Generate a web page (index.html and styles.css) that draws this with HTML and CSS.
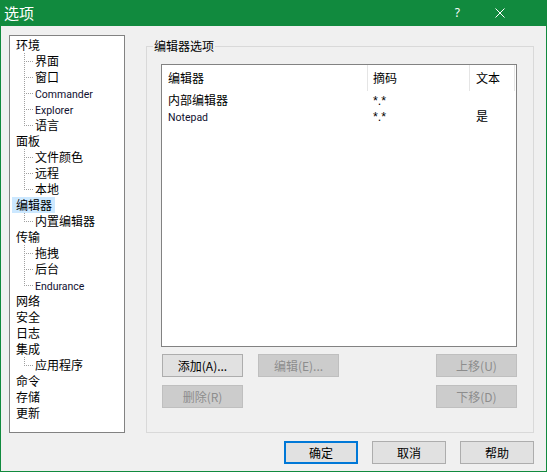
FILE: index.html
```html
<!DOCTYPE html>
<html lang="zh-CN">
<head>
<meta charset="utf-8">
<title>选项</title>
<link rel="stylesheet" href="styles.css">
</head>
<body>
<div class="window">
  <div class="titlebar">
    <span class="title">选项</span>
    <span class="help">?</span>
    <span class="close"><svg width="10" height="10" viewBox="0 0 10 10"><path d="M0.5 0.5 L9.5 9.5 M9.5 0.5 L0.5 9.5" stroke="#fff" stroke-width="1" fill="none"/></svg></span>
  </div>
  <div class="content">
    <div class="main">
      <div class="tree">
        <div class="node"><span>环境</span></div>
        <div class="children">
          <div class="child">界面</div>
          <div class="child">窗口</div>
          <div class="child"><span class="en">Commander</span></div>
          <div class="child"><span class="en">Explorer</span></div>
          <div class="child last">语言</div>
        </div>
        <div class="node"><span>面板</span></div>
        <div class="children">
          <div class="child">文件颜色</div>
          <div class="child">远程</div>
          <div class="child last">本地</div>
        </div>
        <div class="node sel"><span>编辑器</span></div>
        <div class="children">
          <div class="child last">内置编辑器</div>
        </div>
        <div class="node"><span>传输</span></div>
        <div class="children">
          <div class="child">拖拽</div>
          <div class="child">后台</div>
          <div class="child last"><span class="en">Endurance</span></div>
        </div>
        <div class="node"><span>网络</span></div>
        <div class="node"><span>安全</span></div>
        <div class="node"><span>日志</span></div>
        <div class="node"><span>集成</span></div>
        <div class="children">
          <div class="child last">应用程序</div>
        </div>
        <div class="node"><span>命令</span></div>
        <div class="node"><span>存储</span></div>
        <div class="node"><span>更新</span></div>
      </div>
      <fieldset class="group">
        <legend>编辑器选项</legend>
        <div class="list">
          <div class="list-head">
            <div class="hc c1">编辑器</div>
            <div class="hc c2">摘码</div>
            <div class="hc c3">文本</div>
            <div class="hc c4"></div>
          </div>
          <div class="list-body">
            <div class="list-row">
              <div class="c1">内部编辑器</div>
              <div class="c2"><span class="mask">*.*</span></div>
              <div class="c3"></div>
            </div>
            <div class="list-row">
              <div class="c1"><span class="en">Notepad</span></div>
              <div class="c2"><span class="mask">*.*</span></div>
              <div class="c3">是</div>
            </div>
          </div>
        </div>
        <div class="btn-row">
          <button class="btn first">添加(A)...</button>
          <button class="btn dis second">编辑(E)...</button>
          <button class="btn dis push">上移(U)</button>
        </div>
        <div class="btn-row row2">
          <button class="btn dis first">删除(R)</button>
          <button class="btn dis push">下移(D)</button>
        </div>
      </fieldset>
    </div>
    <div class="footer">
      <button class="btn fbtn default">确定</button>
      <button class="btn fbtn">取消</button>
      <button class="btn fbtn">帮助</button>
    </div>
  </div>
</div>
</body>
</html>
```

FILE: styles.css
```css
html, body {
  margin: 0;
  padding: 0;
  background: #f0f0f0;
}
body {
  font-family: "Noto Sans CJK SC", sans-serif;
  font-size: 12px;
  color: #000;
}
.en {
  font-family: Roboto, "Liberation Sans", sans-serif;
  font-size: 10.5px;
  color: #101030;
}
.mask {
  font-family: "Liberation Sans", sans-serif;
  font-size: 12.5px;
}
.window {
  width: 547px;
  height: 472px;
  box-sizing: border-box;
  border: 1px solid #118a3e;
  border-top: 0;
  background: #f0f0f0;
  display: flex;
  flex-direction: column;
}
.titlebar {
  height: 26px;
  background: #118a3e;
  color: #fff;
  display: flex;
  align-items: center;
  padding: 0 41px 0 3px;
}
.title {
  font-size: 15px;
  line-height: 26px;
  flex: 1;
}
.help {
  font-family: "Noto Sans", sans-serif;
  font-size: 12px;
  line-height: 26px;
  margin-right: 35px;
}
.close {
  display: flex;
  width: 10px;
  height: 10px;
}
.content {
  flex: 1;
  padding: 9px 12px 0 8px;
  display: flex;
  flex-direction: column;
}
.main {
  display: flex;
  gap: 21px;
}
.tree {
  width: 116px;
  height: 398px;
  box-sizing: border-box;
  border: 1px solid #828282;
  background: #fff;
  padding: 1px 0 0 6px;
}
.node, .child {
  height: 16px;
  line-height: 16px;
  white-space: nowrap;
}
.sel span {
  background: #cce8ff;
  display: inline-block;
  padding: 0 3px 0 4px;
  margin-left: -4px;
}
.children {
  padding-left: 19px;
}
.child {
  position: relative;
}
.child::before {
  content: "";
  position: absolute;
  left: -11px;
  top: 8px;
  width: 9px;
  height: 1px;
  background-image: linear-gradient(to right, #a0a0a0 50%, transparent 50%);
  background-size: 2px 1px;
}
.child::after {
  content: "";
  position: absolute;
  left: -11px;
  top: 0;
  width: 1px;
  height: 16px;
  background-image: linear-gradient(to bottom, #a0a0a0 50%, transparent 50%);
  background-size: 1px 2px;
}
.child.last::after {
  height: 9px;
}
.group {
  margin: 4px 0 0 0;
  width: 388px;
  box-sizing: border-box;
  border: 1px solid #d9d9d9;
  padding: 0 16px 10px 14px;
  min-width: 0;
}
.group legend {
  padding: 0 1px;
  margin-left: -8px;
  line-height: 14px;
  font-size: 12px;
}
.list {
  margin-top: 11px;
  width: 356px;
  height: 283px;
  box-sizing: border-box;
  border: 1px solid #828282;
  background: #fff;
}
.list-head {
  display: grid;
  grid-template-columns: 206px 102px 45px 1fr;
  height: 26px;
  line-height: 26px;
}
.hc {
  border-right: 1px solid #e5e5e5;
  white-space: nowrap;
}
.hc.c4 {
  border-right: 0;
}
.list-body {
  padding-top: 1px;
}
.list-row {
  display: grid;
  grid-template-columns: 206px 102px 45px;
  height: 16px;
  line-height: 16px;
  white-space: nowrap;
}
.c1 { padding-left: 6px; }
.c2 { padding-left: 5px; }
.c3 { padding-left: 6px; }
.btn-row {
  display: flex;
  margin-top: 7px;
  padding-left: 1px;
}
.btn-row.row2 {
  margin-top: 8px;
}
.btn {
  box-sizing: border-box;
  width: 81px;
  height: 23px;
  border: 1px solid #adadad;
  background: #e1e1e1;
  color: #000;
  font-family: inherit;
  font-size: 12px;
  padding: 0;
  margin: 0;
  display: flex;
  align-items: center;
  justify-content: center;
  white-space: nowrap;
}
.btn.dis {
  background: #cccccc;
  border-color: #bfbfbf;
  color: #8d8d8d;
}
.btn.second {
  margin-left: 15px;
}
.btn.push {
  margin-left: auto;
}
.footer {
  margin-top: 8px;
  display: flex;
  justify-content: flex-end;
  gap: 14px;
}
.btn.fbtn {
  width: 74px;
}
.btn.default {
  border: 2px solid #0078d7;
}
```
